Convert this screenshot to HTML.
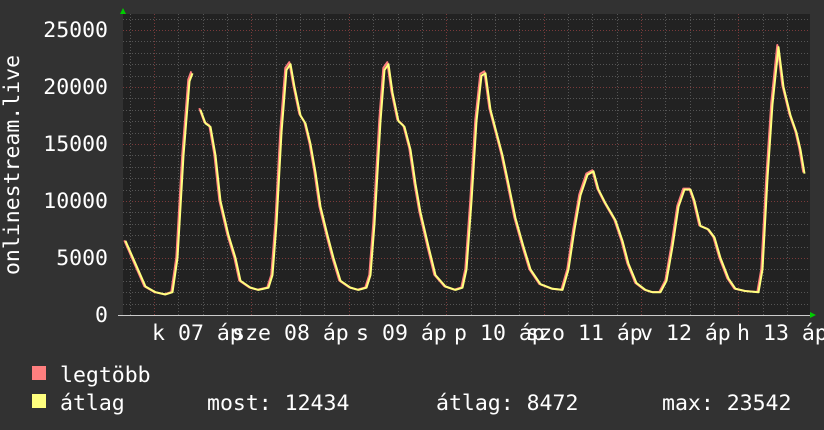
<!DOCTYPE html>
<html><head><meta charset="utf-8"><style>
body{margin:0;background:#323232;width:824px;height:430px;overflow:hidden;font-family:"DejaVu Sans Mono","Liberation Mono",monospace;color:#fff}
svg{position:absolute;left:0;top:0}
.t{font-family:"DejaVu Sans Mono","Liberation Mono",monospace;font-size:21.5px;fill:#fff}
</style></head><body>
<svg width="824" height="430" id="s">
<rect x="123" y="14" width="687" height="301" fill="#222"/>
<g id="grid"></g>
<polyline id="p1" fill="none" stroke="#ff7f7f" stroke-width="2" stroke-linejoin="round"/>
<polyline id="p2" fill="none" stroke="#ffff7f" stroke-width="2" stroke-linejoin="round"/>
<polygon points="120,14 126,14 123,8" fill="#0c0"/>
<polygon points="810,312 810,318 816,315" fill="#0c0"/>
<g class="t" text-anchor="end">
<text x="108" y="37">25000</text><text x="108" y="94">20000</text><text x="108" y="151">15000</text>
<text x="108" y="208">10000</text><text x="108" y="265">5000</text><text x="108" y="322">0</text>
</g>
<text class="t" transform="translate(19,165) rotate(-90)" text-anchor="middle">onlinestream.live</text>
<g class="t" id="xl"></g>
<rect x="32" y="366" width="14" height="14" fill="#ff7f7f"/>
<rect x="32" y="394" width="14" height="14" fill="#ffff7f"/>
<text class="t" x="60" y="382">legtöbb</text>
<text class="t" x="60" y="410">átlag</text>
<text class="t" x="207" y="410">most: 12434</text>
<text class="t" x="436" y="410">átlag: 8472</text>
<text class="t" x="662" y="410">max: 23542</text>
</svg>
<script>
var NS="http://www.w3.org/2000/svg",g=document.getElementById('grid');
function ln(x1,y1,x2,y2,c,d){var l=document.createElementNS(NS,'line');l.setAttribute('x1',x1);l.setAttribute('y1',y1);l.setAttribute('x2',x2);l.setAttribute('y2',y2);l.setAttribute('stroke',c);l.setAttribute('stroke-width',1);l.setAttribute('stroke-dasharray',d);g.appendChild(l);}
for(var v=1000;v<=26000;v+=1000){var y=Math.round(315-v*0.0114)+0.5;ln(123,y,810,y,v%5000?'#555':'#7a3a3a','1,2');}
for(var x=154-24.35*1;x<810;x+=24.35){var xx=Math.round(x)+0.5;if(xx<124)continue;var maj=Math.abs(((x-154)/97.4)-Math.round((x-154)/97.4))<0.01;ln(xx,14,xx,315,maj?'#7a3a3a':'#555','1,2');}
ln(118,315.5,810,315.5,'#ccc','');
var pts=[125,6500,135,4500,145,2500,155,2000,165,1800,172,2000,177,5000,183,14000,189,20500,192,21200,null,200,18000,205,16800,210,16500,215,14000,220,10000,228,7000,235,5000,240,3000,250,2400,258,2200,268,2400,272,3500,276,8000,281,16000,286,21500,290,22000,294,20000,300,17500,305,16800,310,15000,315,12500,320,9500,327,7000,333,5000,340,3000,350,2400,358,2200,366,2400,370,3500,374,8000,380,17000,384,21500,388,22000,392,19500,398,17000,404,16500,410,14500,415,11500,420,9000,428,6000,435,3500,445,2500,455,2200,462,2400,466,4000,471,10000,476,17000,481,21000,485,21200,490,18000,496,16000,502,14000,508,11500,515,8500,523,6000,530,4000,540,2700,552,2300,562,2200,568,4000,574,7500,580,10500,587,12300,593,12600,598,11000,605,9800,615,8300,622,6500,628,4500,636,2800,645,2200,652,2000,660,2000,666,3000,672,6000,678,9500,684,11000,690,11000,694,10000,700,7800,708,7500,714,6800,720,5000,728,3200,735,2300,745,2100,758,2000,762,4000,767,12000,772,18500,778,23500,783,20000,790,17500,796,16000,800,14500,804,12400];
var i=0,s=document.getElementById('s');
var segs=[[]];for(i=0;i<pts.length;){if(pts[i]===null){segs.push([]);i++;continue;}segs[segs.length-1].push([pts[i],pts[i+1]]);i+=2;}
segs.forEach(function(sg,k){var p1=k?document.createElementNS(NS,'polyline'):document.getElementById('p1');var p2=k?document.createElementNS(NS,'polyline'):document.getElementById('p2');
if(k){[p1,p2].forEach(function(p,j){p.setAttribute('fill','none');p.setAttribute('stroke',j?'#ffff7f':'#ff7f7f');p.setAttribute('stroke-width',2);p.setAttribute('stroke-linejoin','round');});s.insertBefore(p1,document.getElementById('p2'));s.insertBefore(p2,document.getElementById('p2').nextSibling);}
p1.setAttribute('points',sg.map(function(q){return (q[0]-0.7)+','+(315-q[1]*1.008*0.0114)}).join(' '));
p2.setAttribute('points',sg.map(function(q){return (q[0]+0.5)+','+(315-q[1]*0.0114)}).join(' '));});
var xl=document.getElementById('xl');
var labs=[['k','07'],['sze','08'],['s','09'],['p','10'],['szo','11'],['v','12'],['h','13']];
var xs=[178,284,382,480,578,666,763];
labs.forEach(function(l,i){var t=document.createElementNS(NS,'text');t.setAttribute('x',xs[i]-13);t.setAttribute('y',340);t.setAttribute('text-anchor','end');t.textContent=l[0];xl.appendChild(t);
var t2=document.createElementNS(NS,'text');t2.setAttribute('x',xs[i]);t2.setAttribute('y',340);t2.textContent=l[1]+' áp';xl.appendChild(t2);});
</script>
</body></html>
